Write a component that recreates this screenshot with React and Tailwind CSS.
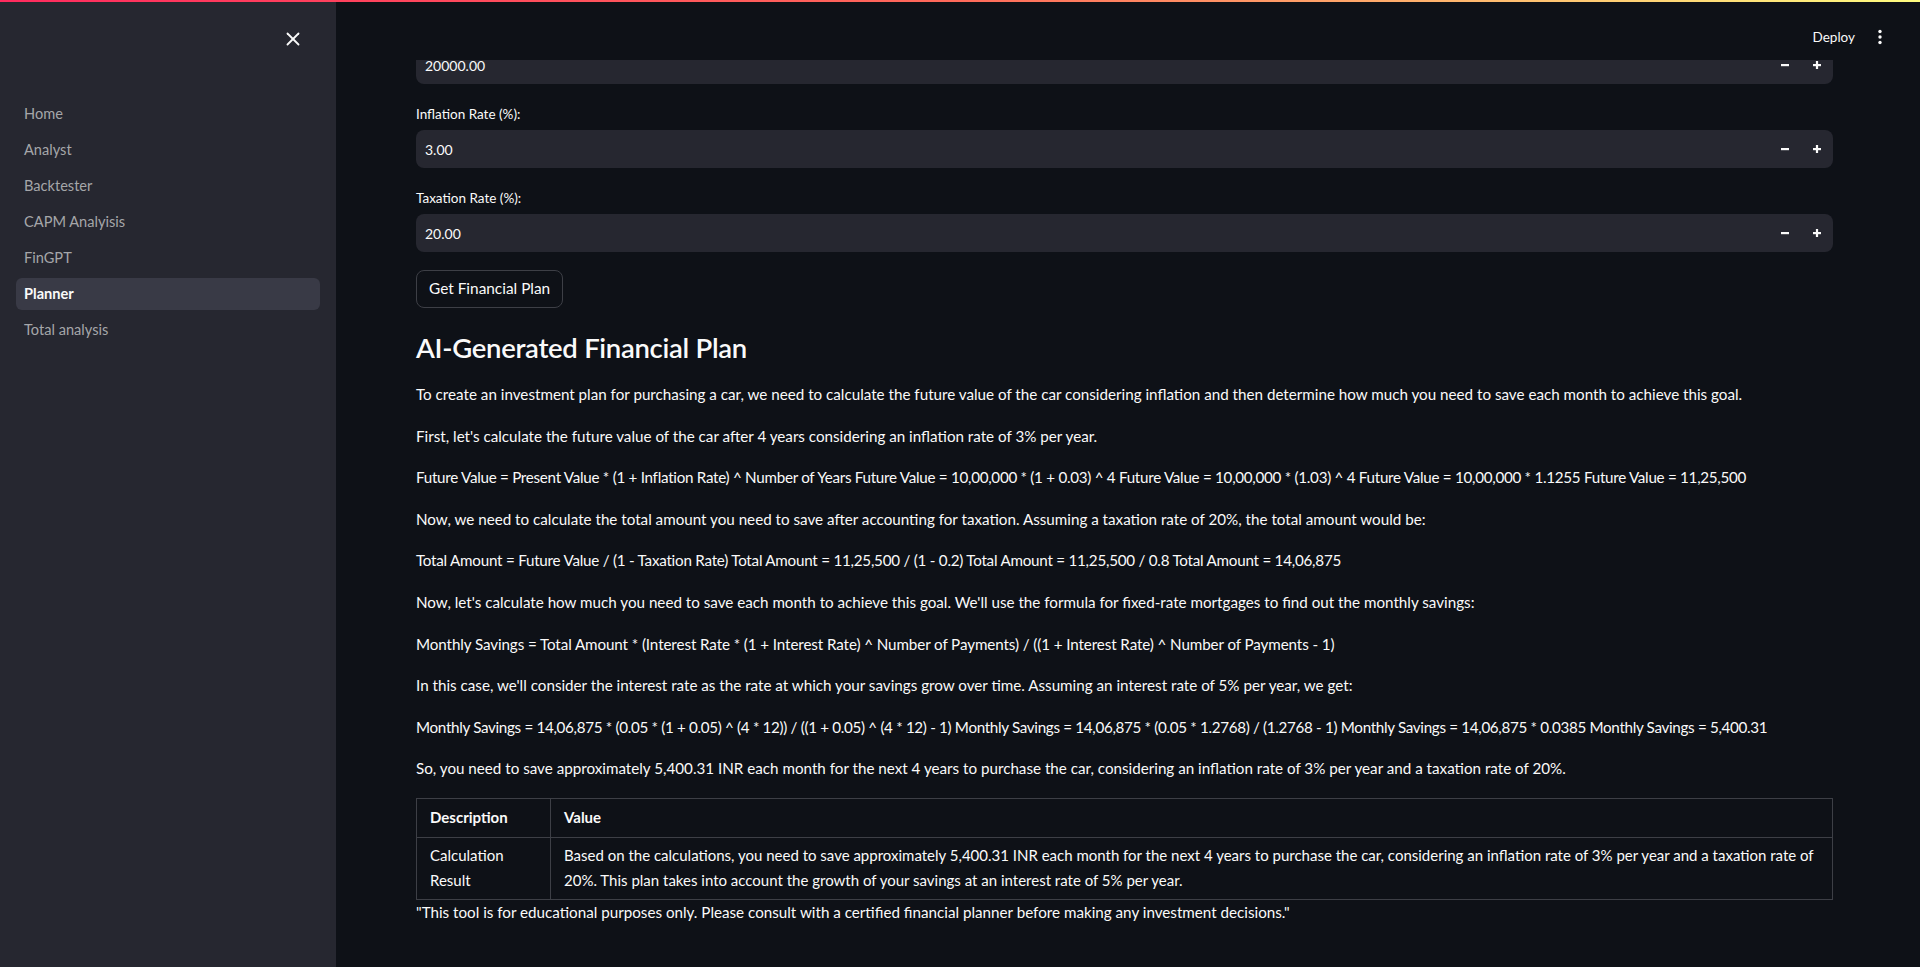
import { X } from "lucide-react";

const navItems = ["Home", "Analyst", "Backtester", "CAPM Analyisis", "FinGPT", "Planner", "Total analysis"];

// formula lines are set a bit tighter so they fit on one line like the original
const paragraphs = [
  ["To create an investment plan for purchasing a car, we need to calculate the future value of the car considering inflation and then determine how much you need to save each month to achieve this goal.", ""],
  ["First, let's calculate the future value of the car after 4 years considering an inflation rate of 3% per year.", ""],
  ["Future Value = Present Value * (1 + Inflation Rate) ^ Number of Years Future Value = 10,00,000 * (1 + 0.03) ^ 4 Future Value = 10,00,000 * (1.03) ^ 4 Future Value = 10,00,000 * 1.1255 Future Value = 11,25,500", "tracking-[-0.28px]"],
  ["Now, we need to calculate the total amount you need to save after accounting for taxation. Assuming a taxation rate of 20%, the total amount would be:", ""],
  ["Total Amount = Future Value / (1 - Taxation Rate) Total Amount = 11,25,500 / (1 - 0.2) Total Amount = 11,25,500 / 0.8 Total Amount = 14,06,875", "tracking-[-0.24px]"],
  ["Now, let's calculate how much you need to save each month to achieve this goal. We'll use the formula for fixed-rate mortgages to find out the monthly savings:", ""],
  ["Monthly Savings = Total Amount * (Interest Rate * (1 + Interest Rate) ^ Number of Payments) / ((1 + Interest Rate) ^ Number of Payments - 1)", "tracking-[-0.1px]"],
  ["In this case, we'll consider the interest rate as the rate at which your savings grow over time. Assuming an interest rate of 5% per year, we get:", ""],
  ["Monthly Savings = 14,06,875 * (0.05 * (1 + 0.05) ^ (4 * 12)) / ((1 + 0.05) ^ (4 * 12) - 1) Monthly Savings = 14,06,875 * (0.05 * 1.2768) / (1.2768 - 1) Monthly Savings = 14,06,875 * 0.0385 Monthly Savings = 5,400.31", "tracking-[-0.32px]"],
  ["So, you need to save approximately 5,400.31 INR each month for the next 4 years to purchase the car, considering an inflation rate of 3% per year and a taxation rate of 20%.", ""],
];

function Stepper() {
  return (
    <div className="flex items-center h-full">
      <button className="w-8 h-full flex items-center justify-center" aria-label="Decrement">
        <svg width="10" height="10" viewBox="0 0 10 10">
          <rect x="1" y="4" width="8" height="2.2" fill="#fafafa" />
        </svg>
      </button>
      <button className="w-8 h-full flex items-center justify-center" aria-label="Increment">
        <svg width="10" height="10" viewBox="0 0 10 10">
          <rect x="1" y="4" width="8" height="2.2" fill="#fafafa" />
          <rect x="3.9" y="1" width="2.2" height="8" fill="#fafafa" />
        </svg>
      </button>
    </div>
  );
}

function NumberInput({ value }) {
  return (
    <div className="h-[38px] bg-[#262730] rounded-lg flex items-center justify-between">
      <span className="pl-[9px] text-[14px] text-[#fafafa]">{value}</span>
      <Stepper />
    </div>
  );
}

function Label({ children }) {
  return <div className="h-6 flex items-center text-[13.5px] text-[#fafafa]">{children}</div>;
}

export default function App() {
  return (
    <div className="relative h-[967px] w-full overflow-hidden bg-[#0e1117] font-['Lato',sans-serif] text-[#fafafa] flex">
      {/* decoration line */}
      <div className="absolute top-0 left-0 right-0 h-[2px] z-20 bg-[linear-gradient(90deg,#ff2b5e,#ff6a5a_50%,#fffd80)]" />

      {/* Sidebar */}
      <aside className="w-[336px] shrink-0 h-full bg-[#262730] flex flex-col">
        <div className="h-[98px] flex justify-end items-start pt-[28px] pr-[32px]">
          <X size={22} strokeWidth={2} color="#fafafa" />
        </div>
        <nav className="flex flex-col gap-1 px-4 text-[14.6px]">
          {navItems.map((item) => (
            <a
              key={item}
              href="#"
              className={
                item === "Planner"
                  ? "h-8 flex items-center pl-2 rounded-md bg-[#393a46] text-[#fafafa] font-bold"
                  : "h-8 flex items-center pl-2 rounded-md text-[#a5a6a9]"
              }
            >
              {item}
            </a>
          ))}
        </nav>
      </aside>

      {/* Main */}
      <main className="relative flex-1 min-w-0 h-full overflow-hidden">
        <header className="absolute top-0 left-0 right-0 h-[60px] bg-[#0e1117] z-10 flex items-start justify-end pt-[27px] pr-[37px] gap-[22px]">
          <span className="text-[13.5px] leading-[20px] text-[#fafafa]">Deploy</span>
          <svg width="6" height="16" viewBox="0 0 6 16" className="mt-[2px]" aria-label="Menu">
            <circle cx="3" cy="2.5" r="1.7" fill="#fafafa" />
            <circle cx="3" cy="8" r="1.7" fill="#fafafa" />
            <circle cx="3" cy="13.5" r="1.7" fill="#fafafa" />
          </svg>
        </header>

        <div className="pt-[46px] pl-[80px] pr-[87px] flex flex-col">
          <NumberInput value="20000.00" />
          <div className="mt-[18px]">
            <Label>Inflation Rate (%):</Label>
          </div>
          <div className="mt-1">
            <NumberInput value="3.00" />
          </div>
          <div className="mt-[18px]">
            <Label>Taxation Rate (%):</Label>
          </div>
          <div className="mt-1">
            <NumberInput value="20.00" />
          </div>
          <div className="mt-[18px]">
            <button className="h-[38px] px-3 rounded-lg border border-[#3d3f46] text-[15.4px] text-[#fafafa]">
              Get Financial Plan
            </button>
          </div>

          <h3 className="mt-[23px] text-[27.5px] leading-[34px] font-semibold tracking-[-0.3px]">
            AI-Generated Financial Plan
          </h3>

          <div className="mt-[17px] text-[15.2px] leading-[25.6px]">
            {paragraphs.map(([p, tight], i) => (
              <p key={i} className={`mb-4 whitespace-nowrap ${tight}`}>
                {p}
              </p>
            ))}
          </div>

          <table className="mt-0 w-full border-collapse text-[15px]">
            <thead>
              <tr>
                <th className="w-[134px] text-left font-bold border border-[#3d3f46] px-[13px] py-1.5 leading-[25.6px]">Description</th>
                <th className="text-left font-bold border border-[#3d3f46] px-[13px] py-1.5 leading-[25.6px]">Value</th>
              </tr>
            </thead>
            <tbody>
              <tr>
                <td className="border border-[#3d3f46] px-[13px] py-[5px] leading-[25.6px] align-top">Calculation Result</td>
                <td className="border border-[#3d3f46] px-[13px] py-[5px] leading-[25.6px] align-top">
                  Based on the calculations, you need to save approximately 5,400.31 INR each month for the next 4 years to
                  purchase the car, considering an inflation rate of 3% per year and a taxation rate of 20%. This plan takes
                  into account the growth of your savings at an interest rate of 5% per year.
                </td>
              </tr>
            </tbody>
          </table>
          <p className="text-[15.2px] leading-[25.6px]">
            "This tool is for educational purposes only. Please consult with a certified financial planner before making any
            investment decisions."
          </p>
        </div>
      </main>
    </div>
  );
}
